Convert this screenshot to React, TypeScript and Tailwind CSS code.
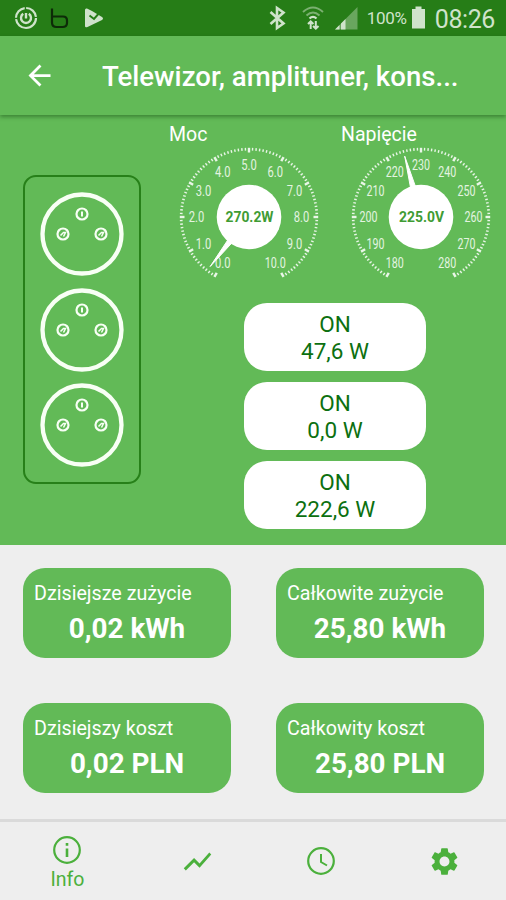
import { MdArrowBack, MdSettings, MdShowChart } from "react-icons/md";

const moc = ["0.0", "1.0", "2.0", "3.0", "4.0", "5.0", "6.0", "7.0", "8.0", "9.0", "10.0"];
const napiecie = ["180", "190", "200", "210", "220", "230", "240", "250", "260", "270", "280"];

const outlets = ["47,6 W", "0,0 W", "222,6 W"];

const stats = [
  { label: "Dzisiejsze zużycie", value: "0,02 kWh" },
  { label: "Całkowite zużycie", value: "25,80 kWh" },
  { label: "Dzisiejszy koszt", value: "0,02 PLN" },
  { label: "Całkowity koszt", value: "25,80 PLN" },
];

function polar(r: number, deg: number) {
  const a = (deg * Math.PI) / 180;
  return { x: 70 + r * Math.cos(a), y: 70 + r * Math.sin(a) };
}

function StatusBar() {
  return (
    <div className="flex h-9 items-center justify-between bg-[#267d17] text-[#cfe3cb]">
      <div className="flex items-center pl-[14px]">
        <svg className="h-6 w-6" viewBox="0 0 24 24" fill="none" stroke="currentColor">
          <circle cx="12" cy="12" r="10" strokeWidth="2.2" strokeDasharray="30 1.5 14 1.5 14.3 1.5" />
          <path d="M9.200 7.800a5 5 0 1 0 5.600 0M12 7v5.500" strokeWidth="2.4" />
        </svg>
        <svg className="ml-3 h-6 w-[20px]" viewBox="0 0 20 24" fill="none" stroke="#0d2b08" strokeWidth="2.2">
          <path d="M2 2.500v14q0 4.500 4.500 4.500h6q4.500 0 4.500-4v-2.500q0-4-4-4h-11" />
        </svg>
        <svg className="ml-[14px] h-[22px] w-5" viewBox="0 0 20 22">
          <path d="M1 3q0-2 2-1.500l5 2.500 10 6q2 1.500 0 3l-14.500 7q-2.500 1-2.500-1z" fill="currentColor" />
          <path d="M5.500 8.500l4.500 3.500 7-8" fill="none" stroke="#267d17" strokeWidth="2" />
        </svg>
      </div>
      <div className="flex items-center pr-[11px]">
        <svg className="h-[26px] w-[26px]" viewBox="0 0 26 26" fill="none" stroke="currentColor" strokeWidth="2.6">
          <path d="M5.500 7l13 11.500-6.500 4.500v-20l6.500 4.500-13 11.500" />
        </svg>
        <svg className="ml-[10px] h-[26px] w-[26px]" viewBox="0 0 26 26" fill="none" stroke="currentColor">
          <path d="M2 7q10-9 20 0M5.500 10.500q6.500-6 13 0" strokeWidth="2" opacity="0.5" />
          <path d="M8.500 13.500q3.500-3.500 7 0" strokeWidth="2.200" />
          <path d="M9.700 24v-7M7 19l2.700-2.700 2.700 2.700M14.800 16v7M12 21l2.800 2.700 2.700-2.700" strokeWidth="2" />
        </svg>
        <svg className="ml-[8px] h-[23px] w-[23px]" viewBox="0 0 23 23" fill="currentColor">
          <path d="M0 22.500L22.500 0v22.500z" opacity="0.4" />
          <path d="M0 22.500l4.500-4.500v4.500zM6 22.500v-6l4.500-4.500v10.500z" />
        </svg>
        <span className="ml-[9px] w-10 pt-px text-[17px] tracking-[-0.3px]">100%</span>
        <svg className="ml-1 h-6 w-[15px]" viewBox="0 0 15 24" fill="currentColor">
          <path d="M4.500 0.500h6v2.500h3.500v19.500h-13v-19.500h3.500z" />
        </svg>
        <span className="ml-[9px] pt-[3px] text-[25px] tracking-[-0.4px]">08:26</span>
      </div>
    </div>
  );
}

function Header() {
  return (
    <div className="relative flex h-[79px] items-center bg-[#62ba57] pl-[23px] text-white shadow-[0_2px_4px_rgba(0,50,0,0.4)]">
      <MdArrowBack className="h-[33px] w-[33px]" />
      <h1 className="ml-[46px] pt-[3px] text-[27.6px] font-medium">Telewizor, amplituner, kons...</h1>
    </div>
  );
}

type GaugeProps = { title: string; labels: string[]; value: string; angle: number };

function Gauge({ title, labels, value, angle }: GaugeProps) {
  const tip = polar(63, angle);
  const a = polar(30, angle - 5);
  const b = polar(30, angle + 5);
  return (
    <div className="w-[140px]">
      <div className="-ml-[10px] h-[27px] text-[19.5px] leading-[30px] text-white">{title}</div>
      <svg className="h-[140px] w-[140px] overflow-visible" viewBox="0 0 140 140">
        {Array.from({ length: 101 }, (_, i) => {
          const deg = 120 + i * 3;
          const p = polar(i % 10 ? 66.500 : 64.500, deg);
          const q = polar(69.200, deg);
          return (
            <line key={i} x1={p.x} y1={p.y} x2={q.x} y2={q.y} stroke="#eaf6e8" strokeWidth={i % 10 ? 1.4 : 2.4} />
          );
        })}
        {labels.map((l, i) => {
          const p = polar(52.500, 120 + i * 30);
          return (
            <text
              key={l}
              x={p.x}
              y={p.y + 5.300}
              textAnchor="middle"
              textLength={l.length === 4 ? 21 : l.includes(".") ? 15.500 : 18}
              lengthAdjust="spacingAndGlyphs"
              fontSize="14"
              fill="#e4f4e1"
            >
              {l}
            </text>
          );
        })}
        <polygon points={`${tip.x},${tip.y} ${a.x},${a.y} ${b.x},${b.y}`} fill="white" stroke="white" />
        <circle cx="70" cy="70" r="32.300" fill="white" />
        <text
          x="70.500"
          y="75.300"
          textAnchor="middle"
          textLength={value.endsWith("W") ? 48 : 45}
          lengthAdjust="spacingAndGlyphs"
          fontSize="15.500"
          fontWeight="700"
          fill="#3f9c34"
        >
          {value}
        </text>
      </svg>
    </div>
  );
}

function Socket() {
  return (
    <svg className="h-[84px] w-[84px]" viewBox="0 0 84 84" fill="none" stroke="#f8fff5">
      <circle cx="42" cy="42" r="39.500" strokeWidth="4.300" />
      {[[42, 22], [23, 42], [61, 42]].map(([x, y]) => (
        <g key={x}>
          <circle cx={x} cy={y} r="5.500" strokeWidth="2.200" />
          {x === 42 ? (
            <path d={`M${x} ${y - 2.500}v5`} strokeWidth="2" />
          ) : (
            <path d={`M${x - 2.500} ${y + 1.500}l3-3h2l-2 4`} strokeWidth="1.500" />
          )}
        </g>
      ))}
    </svg>
  );
}

function Panel() {
  return (
    <div className="flex h-[430px] bg-[#62ba57]">
      <div className="mt-[60px] ml-[23px] flex h-[309px] w-[118px] flex-col items-center gap-[11.7px] rounded-[13px] border-2 border-[#278019] pt-[15px]">
        {outlets.map((o) => (
          <Socket key={o} />
        ))}
      </div>
      <div className="ml-[38px] pt-[5px]">
        <div className="flex gap-8">
          <Gauge title="Moc" labels={moc} value="270.2W" angle={128.1} />
          <Gauge title="Napięcie" labels={napiecie} value="225.0V" angle={255} />
        </div>
        <div className="mt-4 ml-[65px] flex flex-col gap-[11px]">
          {outlets.map((power) => (
            <button
              key={power}
              className="h-[68px] w-[182px] rounded-[23px] bg-white pt-px text-[22.5px] leading-[27px] text-[#0c7010]"
            >
              ON
              <br />
              {power}
            </button>
          ))}
        </div>
      </div>
    </div>
  );
}

function Stats() {
  return (
    <div className="grid h-[274px] grid-cols-[208px_208px] grid-rows-[90px_90px] gap-x-[45px] gap-y-[45px] pt-[23px] pl-[23px] text-white">
      {stats.map((s) => (
        <div key={s.label} className="rounded-[22px] bg-[#62ba57] pt-3">
          <div className="pl-[11px] text-[19.7px] leading-[28px]">{s.label}</div>
          <div className="mt-[5px] text-center text-[27.8px] leading-8 font-bold">{s.value}</div>
        </div>
      ))}
    </div>
  );
}

function BottomNav() {
  return (
    <div className="flex h-[81px] items-center border-t-3 border-[#dadada] text-[#4bb03c]">
      <div className="flex w-[135px] flex-col items-center pt-[10px]">
        <svg className="h-7 w-7" viewBox="0 0 28 28" fill="none" stroke="currentColor" strokeWidth="2.2">
          <circle cx="14" cy="14" r="12.800" />
          <path d="M14 7v2.800M14 12.500v8.500" strokeWidth="2.600" />
        </svg>
        <span className="text-[19.5px] leading-8">Info</span>
      </div>
      <div className="flex w-[125px] justify-center">
        <MdShowChart className="h-[33px] w-[33px]" />
      </div>
      <div className="flex w-[123px] justify-center">
        <svg className="h-7 w-7" viewBox="0 0 28 28" fill="none" stroke="currentColor" strokeWidth="2.2">
          <circle cx="14" cy="14" r="12.800" />
          <path d="M14 7v8l6 3.500" strokeWidth="2" />
        </svg>
      </div>
      <div className="flex w-[124px] justify-center">
        <MdSettings className="h-[33px] w-[33px]" />
      </div>
    </div>
  );
}

function App() {
  return (
    <div className="h-[900px] w-[506px] overflow-hidden bg-[#eeeeee] font-[Roboto,sans-serif]">
      <StatusBar />
      <Header />
      <Panel />
      <Stats />
      <BottomNav />
    </div>
  );
}

export default App;
